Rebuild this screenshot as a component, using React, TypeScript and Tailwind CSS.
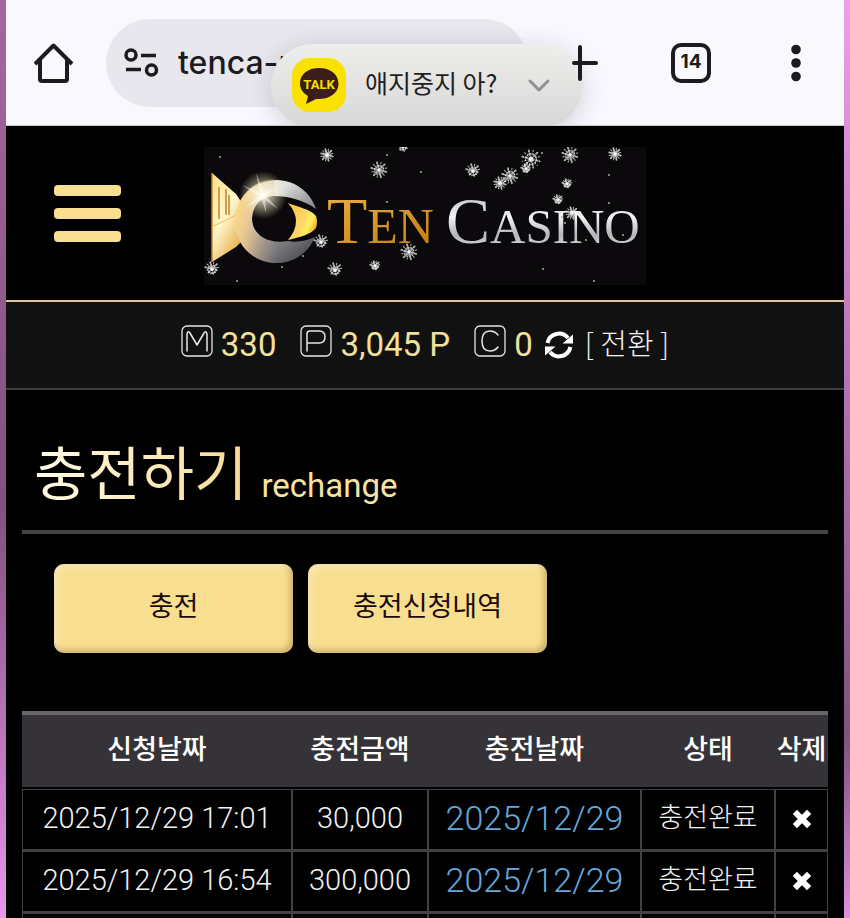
import { useState } from "react";

type Deposit = { requested: string; amount: string; charged: string; status: string };

const deposits: Deposit[] = [
    { requested: "2025/12/29 17:01", amount: "30,000", charged: "2025/12/29", status: "충전완료" },
    { requested: "2025/12/29 16:54", amount: "300,000", charged: "2025/12/29", status: "충전완료" },
];

// x, y, radius
const flakes = [
    [123, 8, 6], [175, 23, 8], [8, 122, 7], [117, 95, 7], [131, 123, 7], [171, 119, 5], [205, 105, 8],
    [269, 24, 7], [296, 36, 6], [306, 29, 8], [327, 12, 9], [322, 22, 5], [366, 8, 8], [411, 7, 6],
    [363, 37, 5], [354, 53, 5], [368, 66, 6], [199, 0, 4],
];

const dots = [
    [16, 10], [183, 8], [217, 25], [183, 55], [99, 109], [78, 120], [33, 134], [338, 6], [405, 28],
    [405, 56], [339, 122], [390, 134], [419, 88], [382, 93], [358, 70], [361, 76],
];

function Snowflake({ x, y, r }: { x: number; y: number; r: number }) {
    const angles = [0, 30, 60, 90, 120, 150];
    return (
        <g transform={`translate(${x} ${y})`} stroke="#fff" strokeLinecap="round">
            {angles.map((a) => (
                <line key={a} x1={-r} x2={r} y1="0" y2="0" transform={`rotate(${a + 15})`} strokeWidth={a % 60 ? 1 : 1.8} strokeDasharray="1.500 2" opacity="0.7" />
            ))}
            <circle r={r * 0.6} fill="none" strokeWidth="1.2" strokeDasharray="1 2" opacity="0.7" />
            <circle r={r * 0.25} fill="#fff" stroke="none" opacity="0.6" />
        </g>
    );
}

function Logo() {
    return (
        <svg viewBox="0 0 442 138" className="block w-full" role="img" aria-label="Ten Casino">
            <defs>
                <linearGradient id="ring" x1="0" y1="0" x2="0.8" y2="1">
                    <stop offset="0" stopColor="#fff8dc" />
                    <stop offset="0.35" stopColor="#dededf" />
                    <stop offset="0.6" stopColor="#98979a" />
                    <stop offset="1" stopColor="#4c4b4f" />
                </linearGradient>
                <linearGradient id="ringWarm" x1="0" y1="0" x2="1" y2="0.2">
                    <stop offset="0" stopColor="#ffdf82" />
                    <stop offset="0.35" stopColor="#eec487" stopOpacity="0.8" />
                    <stop offset="1" stopColor="#a08878" stopOpacity="0" />
                </linearGradient>
                <linearGradient id="tail" x1="0" y1="0" x2="0.6" y2="1">
                    <stop offset="0" stopColor="#ffe08a" />
                    <stop offset="0.55" stopColor="#fff6cc" />
                    <stop offset="1" stopColor="#e8b055" />
                </linearGradient>
                <linearGradient id="eye" x1="0" y1="0" x2="1" y2="0.6">
                    <stop offset="0" stopColor="#ffc935" />
                    <stop offset="0.55" stopColor="#ffd36a" />
                    <stop offset="0.8" stopColor="#fff05a" />
                    <stop offset="1" stopColor="#f1ad32" />
                </linearGradient>
                <linearGradient id="gold" x1="0" y1="0" x2="0.6" y2="1">
                    <stop offset="0" stopColor="#f0b04c" />
                    <stop offset="0.5" stopColor="#d99a30" />
                    <stop offset="1" stopColor="#c98213" />
                </linearGradient>
                <linearGradient id="silver" x1="0" y1="0" x2="0" y2="1">
                    <stop offset="0" stopColor="#a5a5a8" />
                    <stop offset="0.45" stopColor="#f4f4f6" />
                    <stop offset="0.7" stopColor="#b4b4b7" />
                    <stop offset="1" stopColor="#f4f4f6" />
                </linearGradient>
                <radialGradient id="glow">
                    <stop offset="0" stopColor="#fff" />
                    <stop offset="0.25" stopColor="#fffbe4" stopOpacity="0.7" />
                    <stop offset="1" stopColor="#fff3c0" stopOpacity="0" />
                </radialGradient>
            </defs>
            <rect width="442" height="138" fill="#0b090b" />
            <path d="M8 26 L32 47 L38 56 V94 L32 100 L8 115 Z" fill="url(#tail)" />
            <path d="M8 26 V115" stroke="#c98a20" strokeWidth="1.5" />
            <path d="M15 40 V72 M22 42 V68 M25 48 V68" stroke="#b87f24" strokeWidth="1.4" />
            <path d="M8 80 L32 68" stroke="#f0bd5c" strokeWidth="1" />
            <path d="M112 62 A41.500 41.500 0 1 0 111 90 C104 93 94 96 84 94 C62 98 48 86 48 72 C48 58 58 49 70 49 C84 49 100 53 112 62 Z" fill="url(#ring)" />
            <path d="M70 32 C48 33 31 52 31 74 C31 98 49 116 73 116 L80 95 C60 97 48 86 48 72 C48 58 58 49 70 49 Z" fill="url(#ringWarm)" />
            <path d="M84 56 C94 60 106 62 112 69 Q114 75 112 81 C106 88 96 90 84 93 Q100 74 84 56 Z" fill="url(#eye)" />
            <circle cx="59" cy="48" r="24" fill="url(#glow)" />
            <path d="M38 38 L60 47 L74 62 L58 51 Z M52 26 L61 48 L62 66 L57 50 Z M42 60 L57 47 L72 40 L60 51 Z" fill="#fffdf0" opacity="0.5" />
            <text x="123" y="96" fill="url(#gold)" className="font-['Liberation_Serif',serif] text-[66px]">
                T<tspan className="text-[50px]">EN</tspan>
            </text>
            <text x="242" y="96" fill="url(#silver)" className="font-['Liberation_Serif',serif] text-[66px]">
                C<tspan className="text-[49px]">ASINO</tspan>
            </text>
            {flakes.map(([x, y, r]) => <Snowflake key={`${x}-${y}`} x={x} y={y} r={r} />)}
            {dots.map(([x, y]) => <circle key={`${x}-${y}`} cx={x} cy={y} r="1" fill="#aaa" />)}
        </svg>
    );
}

function LetterIcon({ d }: { d: string }) {
    return (
        <svg viewBox="0 0 32 32" className="mb-2 size-8" fill="none" stroke="#e6e6e6" strokeLinejoin="round" strokeLinecap="round" aria-hidden="true">
            <rect x="1" y="1" width="30" height="30" rx="5" strokeWidth="1.3" />
            <path d={d} strokeWidth="1.5" />
        </svg>
    );
}

function BrowserBar() {
    return (
        <header className="relative flex h-[126px] items-center overflow-hidden border-b border-[#c9c8cc] bg-[#f9f8fe] px-7">
            <button type="button" aria-label="홈">
                <svg viewBox="0 0 40 40" className="size-10" fill="none" stroke="#1b1b20" strokeWidth="4" strokeLinejoin="round">
                    <path d="M1 21 L19.500 2.500 L38 21 M6 17 V36 Q6 38 8 38 H31 Q33 38 33 36 V17" />
                </svg>
            </button>
            <div className="ml-8 flex h-[88px] min-w-0 flex-1 items-center gap-4 rounded-full bg-[#e8e7ed] pl-4">
                <svg viewBox="0 0 40 32" className="h-8 w-10 shrink-0" fill="none" stroke="#1b1b20" strokeWidth="3.500" aria-hidden="true">
                    <circle cx="9" cy="8" r="5" />
                    <circle cx="29.500" cy="23" r="5" />
                    <path d="M19 8.500 H34 M4 22.500 H19" />
                </svg>
                <input aria-label="주소" readOnly value="tenca-r" className="min-w-0 flex-1 bg-transparent font-['Inter',sans-serif] text-[32px] font-medium text-[#1b1b20] outline-none" />
            </div>
            <button type="button" aria-label="새 탭" className="relative z-10 ml-8">
                <svg viewBox="0 0 40 40" className="size-10" stroke="#1b1b20" strokeWidth="4" strokeLinecap="round">
                    <path d="M20 4 V36 M14 20 H36" />
                </svg>
            </button>
            <button type="button" aria-label="탭 14개" className="ml-[71px] flex size-10 items-center justify-center rounded-[10px] border-4 border-[#1b1b20] font-['Inter',sans-serif] text-[19px] font-bold text-[#1b1b20]">
                14
            </button>
            <button type="button" aria-label="메뉴" className="ml-[65px]">
                <svg viewBox="0 0 40 40" className="size-10" fill="#1b1b20">
                    <circle cx="20" cy="6.500" r="4.800" />
                    <circle cx="20" cy="20" r="4.800" />
                    <circle cx="20" cy="33.500" r="4.800" />
                </svg>
            </button>

            {/* chat notification floating over the address bar */}
            <div role="status" className="absolute left-[265px] top-11 flex h-[84px] w-[312px] items-center rounded-full bg-linear-to-b from-[#eeeeec] to-[#d8d7d7] px-5 shadow-[0_4px_24px_rgba(40,40,60,0.18)]">
                <svg viewBox="0 0 56 56" className="size-14" aria-hidden="true">
                    <rect x="1" y="0" width="54" height="54" rx="18" fill="#fae100" />
                    <path d="M28 10 C17 10 9 16 9 25.500 C9 31 12 35 17 38 L15 46 L25 41 C38 42 47.500 35 47.500 26 C47.500 16 39 10 28 10 Z" fill="#3b1d1a" />
                    <text x="28" y="31" textAnchor="middle" fill="#fae100" className="font-['Roboto',sans-serif] text-[13px] font-bold">TALK</text>
                </svg>
                <p className="ml-[18px] flex-1 whitespace-nowrap pb-2 font-['Noto_Sans_CJK_KR',sans-serif] text-[25px] leading-8 text-[#1f1f1f]">애지중지 아?</p>
                <button type="button" aria-label="펼치기" className="mr-3">
                    <svg viewBox="0 0 24 24" className="size-6" fill="none" stroke="#929191" strokeWidth="3" strokeLinecap="round" strokeLinejoin="round">
                        <path d="M3 7 L12 16 L21 7" />
                    </svg>
                </button>
            </div>
        </header>
    );
}

function BalanceBar() {
    return (
        <div className="flex h-[90px] items-center justify-center border-t-2 border-b-2 border-t-[#dcc79a] border-b-[#3f3d42] bg-[#121112] font-['Roboto',sans-serif] text-[33px] text-[#f3e09b]">
            <LetterIcon d="M6 26 V9 Q7 5 9 8 L16 20 L23 8 Q25 5 26 9 V26" />
            <span className="ml-2">330</span>
            <span className="ml-6"><LetterIcon d="M7 26 V9 Q7 6 10 6 H19 Q25 6 25 12 Q25 18 19 18 H7" /></span>
            <span className="ml-2">3,045 P</span>
            <span className="ml-6"><LetterIcon d="M24 10 Q21 6 16 6 Q8 6 8 16 Q8 26 16 26 Q21 26 24 22" /></span>
            <span className="ml-2">0</span>
            <button type="button" aria-label="새로고침" className="ml-3">
                <svg viewBox="0 0 28 28" className="size-7" fill="none">
                    <path d="M2.600 12 A11.600 11.600 0 0 1 23 7 M25.400 16 A11.600 11.600 0 0 1 5 21" stroke="#fff" strokeWidth="4" />
                    <path d="M28 3.500 V12.500 H17.500 Z M0 24.500 V15.500 H10.500 Z" fill="#fff" />
                </svg>
            </button>
            <button type="button" className="ml-3 whitespace-nowrap pb-1 font-['Noto_Sans_CJK_KR',sans-serif] text-[29px] font-light text-[#f1f1f1]">[ 전환 ]</button>
        </div>
    );
}

export default function App() {
    const [tab, setTab] = useState("충전신청내역");
    const tabs = ["충전", "충전신청내역"];

    return (
        <div className="flex h-screen overflow-hidden bg-black">
            <div className="w-1.5 shrink-0 bg-linear-to-b from-[#a5679f] via-[#82517f] via-55% to-[#e896ec]" />
            <div className="min-w-0 flex-1">
                <BrowserBar />

                <div className="grid h-[174px] grid-cols-[1fr_442px_1fr] items-center">
                    <button type="button" aria-label="전체 메뉴" className="ml-12 flex w-[67px] flex-col gap-3">
                        <span className="h-[11px] rounded-sm bg-[#f8df92]" />
                        <span className="h-[11px] rounded-sm bg-[#f8df92]" />
                        <span className="h-[11px] rounded-sm bg-[#f8df92]" />
                    </button>
                    <a href="#" className="pt-1.5"><Logo /></a>
                </div>

                <BalanceBar />

                <main className="px-4 font-['Noto_Sans_CJK_KR',sans-serif]">
                    <h1 className="flex h-[144px] items-end border-b-4 border-[#444346] pb-[18px] pl-3">
                        <span className="bg-linear-to-r from-[#fffbe6] to-[#f8dc94] bg-clip-text text-[58px] leading-[84px] text-transparent">충전하기</span>
                        <span className="mb-1.5 ml-3.5 font-['Roboto',sans-serif] text-[33px] leading-10 text-[#f6e2a4]">rechange</span>
                    </h1>

                    <div className="mb-[58px] mt-[30px] flex gap-[15px] px-8">
                        {tabs.map((name) => (
                            <button key={name} type="button" aria-pressed={tab === name} onClick={() => setTab(name)}
                                className="h-[89px] w-[239px] rounded-[10px] bg-[#f8df90] pb-1.5 text-[27px] text-[#1a0a0c] shadow-[inset_-3px_-3px_6px_rgba(120,85,30,0.35),inset_3px_3px_6px_rgba(255,240,215,0.6)]">
                                {name}
                            </button>
                        ))}
                    </div>

                    <table className="w-full table-fixed border-separate border-spacing-0 text-center text-[27px]">
                        <thead>
                            <tr className="h-[78px] text-white *:whitespace-nowrap *:border-b-2 *:border-t-4 *:border-b-black *:border-t-[#68666a] *:bg-[#363338] *:pb-1.5 *:font-medium">
                                <th className="w-[270px]">신청날짜</th>
                                <th className="w-[136px]">충전금액</th>
                                <th className="w-[213px]">충전날짜</th>
                                <th className="w-[134px]">상태</th>
                                <th className="w-[53px]">삭제</th>
                            </tr>
                        </thead>
                        <tbody className="font-light text-[#f2f2f2]">
                            {deposits.map((d) => (
                                <tr key={d.requested} className="h-[62px] *:whitespace-nowrap *:border *:border-b-2 *:border-[#434145]">
                                    <td className="pb-0.5 font-['Roboto',sans-serif] text-[29px]">{d.requested}</td>
                                    <td className="pb-0.5 font-['Roboto',sans-serif] text-[29px]">{d.amount}</td>
                                    <td className="pb-1 font-['Roboto',sans-serif] text-[34px] leading-10 text-[#64a8dc]">{d.charged}</td>
                                    <td className="pb-2 leading-10">{d.status}</td>
                                    <td className="pb-0.5">
                                        <button type="button" aria-label="삭제" className="mx-auto block">
                                            <svg viewBox="0 0 20 20" className="size-5" stroke="#fff" strokeWidth="6" strokeLinecap="square">
                                                <path d="M5 5 L15 15 M15 5 L5 15" />
                                            </svg>
                                        </button>
                                    </td>
                                </tr>
                            ))}
                            <tr className="h-[62px] *:border *:border-b-2 *:border-[#434145]">
                                <td /><td /><td /><td /><td />
                            </tr>
                        </tbody>
                    </table>
                </main>
            </div>
            <div className="w-1.5 shrink-0 bg-linear-to-b from-[#f09ded] via-[#7d5380] via-80% to-[#df92df]" />
        </div>
    );
}
